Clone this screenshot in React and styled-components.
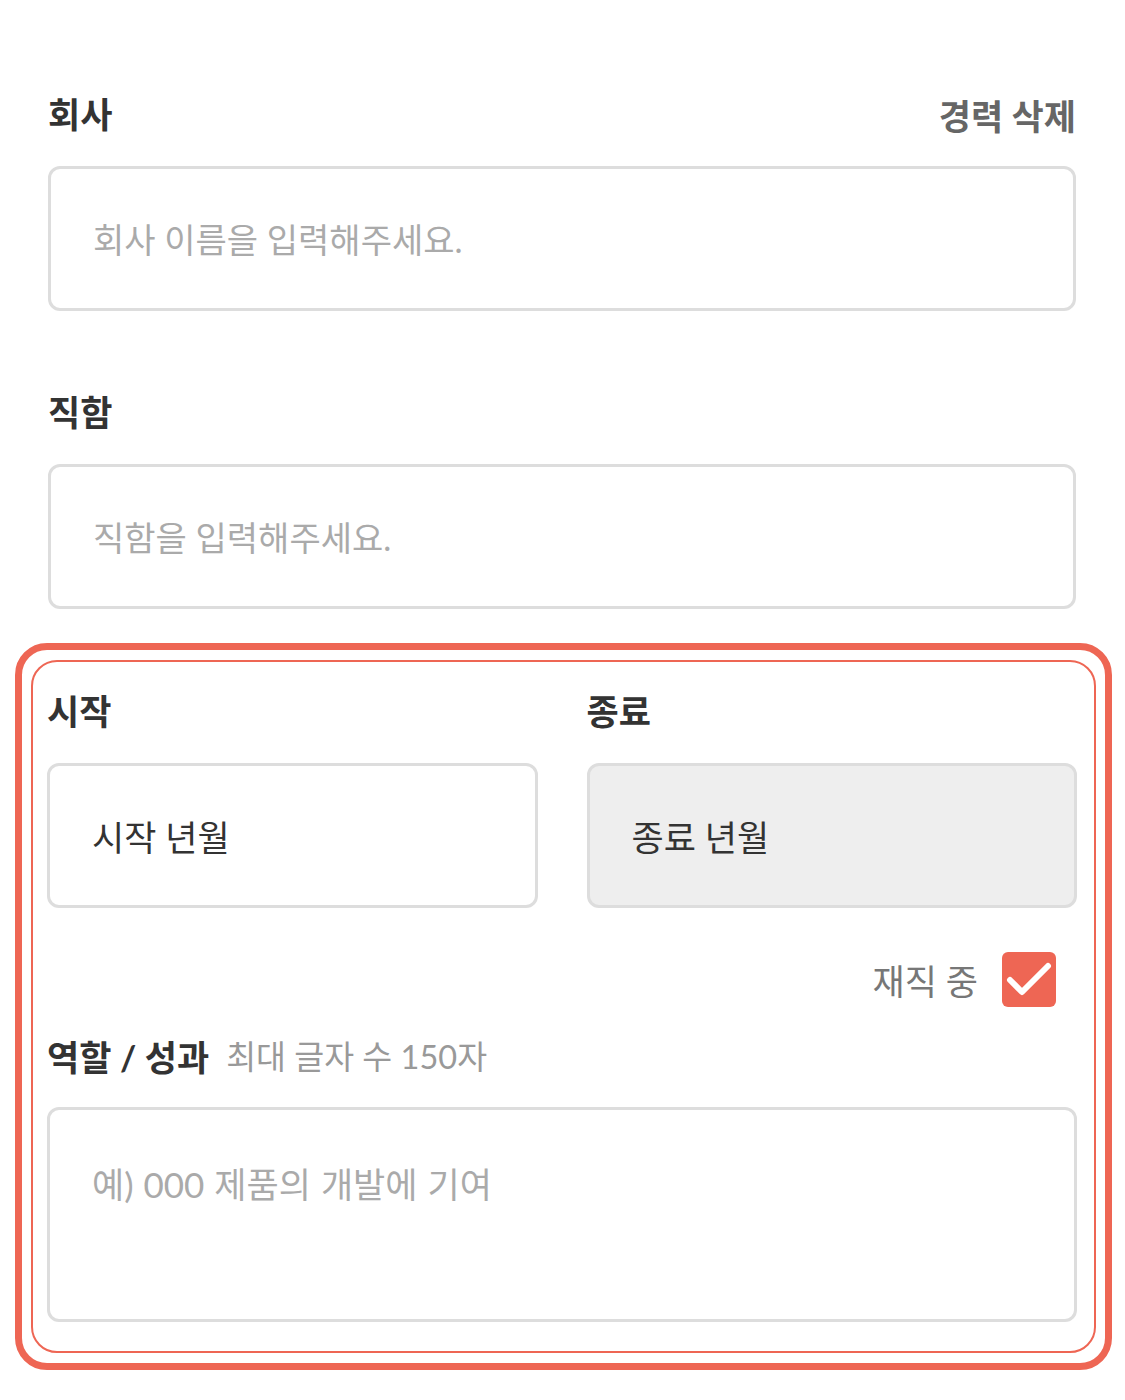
import React from "react"
import styled, { createGlobalStyle } from "styled-components"

const GlobalStyle = createGlobalStyle`
  body {
    margin: 0;
    background: #fff;
    font-family: Lato, "Noto Sans CJK KR", sans-serif;
    color: #333;
  }
`

const ORANGE = "#ee6654"

const Page = styled.div`
  width: 1125px;
  box-sizing: border-box;
  padding: 94px 49px 30px 48px;
`

const Field = styled.div`
  display: flex;
  flex-direction: column;
  gap: ${({ gap }) => gap || "32px"};
  margin-bottom: ${({ last }) => (last ? "0" : "81px")};
`

const LabelRow = styled.div`
  display: flex;
  align-items: center;
  justify-content: ${({ start }) => (start ? "flex-start" : "space-between")};
  height: 40px;
`

const Label = styled.span`
  font-size: 35px;
  font-weight: 700;
  color: #333;
  line-height: 40px;
`

const Hint = styled.span`
  font-size: 32.5px;
  color: #999;
  margin-left: 17px;
  line-height: 40px;
`

const DeleteLink = styled.button`
  border: none;
  background: none;
  padding: 0;
  font-family: inherit;
  font-size: 35px;
  font-weight: 700;
  color: #666;
  cursor: pointer;
`

const Input = styled.input`
  box-sizing: border-box;
  width: 100%;
  height: 145px;
  border: 3px solid #dddddd;
  border-radius: 12px;
  padding: 0 42px;
  font-family: inherit;
  font-size: 35px;
  color: #333;
  background: ${({ disabled }) => (disabled ? "#eeeeee" : "#fff")};
  outline: none;

  &::placeholder {
    color: #aaa;
    font-size: 34px;
  }
  &:disabled {
    color: #333;
    -webkit-text-fill-color: #333;
  }
`

const TextArea = styled.textarea`
  box-sizing: border-box;
  width: 100%;
  height: 215px;
  border: 3px solid #dddddd;
  border-radius: 12px;
  padding: 54px 42px 0;
  font-family: inherit;
  font-size: 35px;
  line-height: 40px;
  word-spacing: 1px;
  resize: none;
  outline: none;
  display: block;

  &::placeholder {
    color: #aaa;
  }
`

const Highlight = styled.section`
  margin: 34px -36px 0 -33px;
  border: 7px solid ${ORANGE};
  border-radius: 32px;
  padding: 10px 9px;
`

const HighlightInner = styled.div`
  border: 2px solid ${ORANGE};
  border-radius: 26px;
  padding: 29px 17px 29px 14px;
`

const DateGrid = styled.div`
  display: grid;
  grid-template-columns: 1fr 1fr;
  column-gap: 49px;
`

const CurrentRow = styled.label`
  display: flex;
  align-items: center;
  justify-content: flex-end;
  gap: 24px;
  margin: 44px 21px 30px 0;
  font-size: 35px;
  color: #777;
`

const CheckBox = styled.span`
  width: 54px;
  height: 55px;
  border-radius: 6px;
  background: ${ORANGE};
  display: flex;
  align-items: center;
  justify-content: center;
`

export default function App() {
  return (
    <Page>
      <GlobalStyle />
      <Field>
        <LabelRow>
          <Label>회사</Label>
          <DeleteLink>경력 삭제</DeleteLink>
        </LabelRow>
        <Input placeholder="회사 이름을 입력해주세요." />
      </Field>
      <Field last>
        <LabelRow>
          <Label>직함</Label>
        </LabelRow>
        <Input placeholder="직함을 입력해주세요." />
      </Field>

      <Highlight>
        <HighlightInner>
          <DateGrid>
            <Field last>
              <LabelRow>
                <Label>시작</Label>
              </LabelRow>
              <Input defaultValue="시작 년월" readOnly />
            </Field>
            <Field last>
              <LabelRow>
                <Label>종료</Label>
              </LabelRow>
              <Input defaultValue="종료 년월" disabled />
            </Field>
          </DateGrid>

          <CurrentRow>
            재직 중
            <CheckBox>
              <svg width="54" height="55" viewBox="0 0 54 55">
                <path
                  d="M8 28 L20 40 L46 14"
                  fill="none"
                  stroke="#fff"
                  strokeWidth="6"
                  strokeLinecap="round"
                  strokeLinejoin="round"
                />
              </svg>
            </CheckBox>
          </CurrentRow>

          <Field last gap="30px">
            <LabelRow start>
              <Label>역할 / 성과</Label>
              <Hint>최대 글자 수 150자</Hint>
            </LabelRow>
            <TextArea placeholder="예) 000 제품의 개발에 기여" />
          </Field>
        </HighlightInner>
      </Highlight>
    </Page>
  )
}
